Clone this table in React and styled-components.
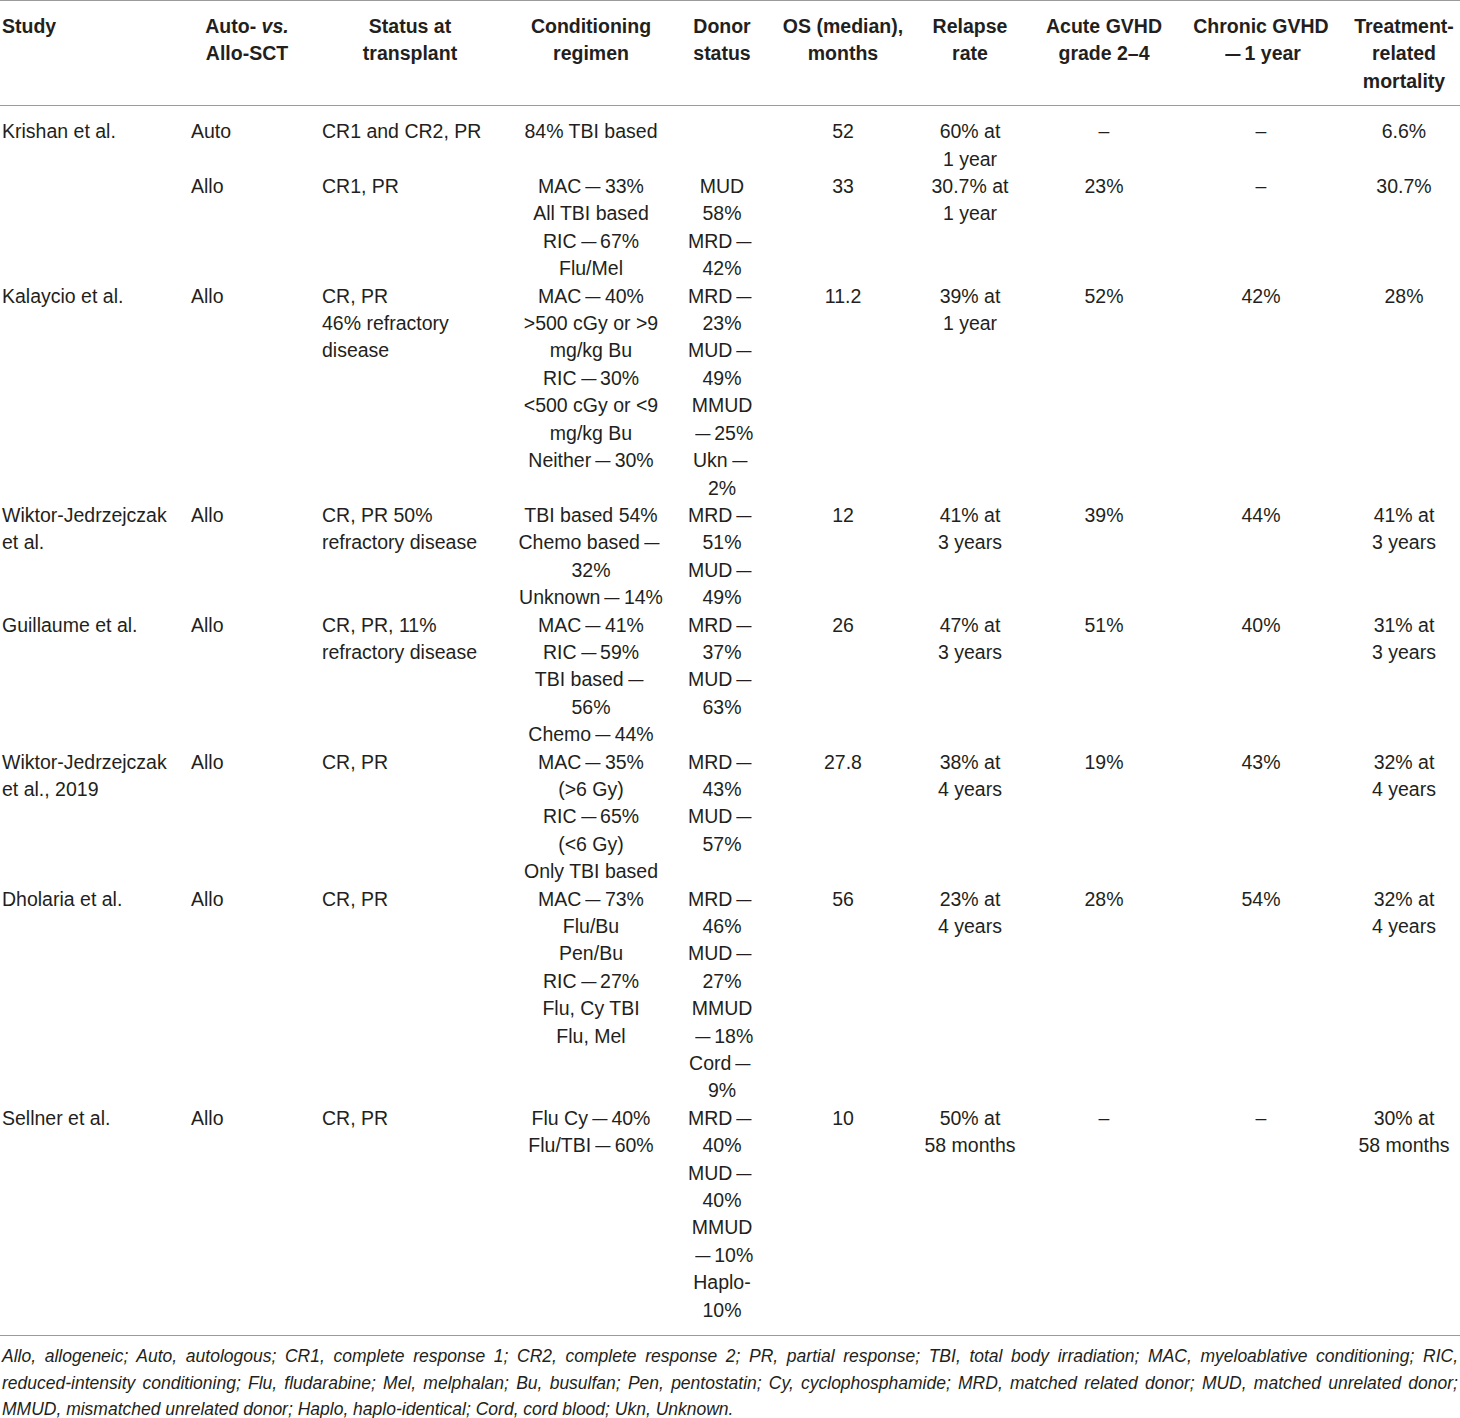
import React from "react";
import styled, { createGlobalStyle } from "styled-components";

const GlobalStyle = createGlobalStyle`
  body {
    margin: 0;
    background: #ffffff;
  }
`;

const columns = [
  { width: 191, body: "left", head: "left", pl: 2, pr: 0 },
  { width: 131, body: "left", head: "center", pl: 0, pr: 19 },
  { width: 196, body: "left", head: "center", pl: 0, pr: 20 },
  { width: 146, body: "center", head: "center", pl: 0, pr: 0 },
  { width: 116, body: "center", head: "center", pl: 0, pr: 0 },
  { width: 126, body: "center", head: "center", pl: 0, pr: 0 },
  { width: 128, body: "center", head: "center", pl: 0, pr: 0 },
  { width: 140, body: "center", head: "center", pl: 0, pr: 0 },
  { width: 174, body: "center", head: "center", pl: 0, pr: 0 },
  { width: 112, body: "center", head: "center", pl: 0, pr: 0 },
];

const headers = [
  ["Study"],
  [
    <>
      Auto- <i>vs.</i>
    </>,
    "Allo-SCT",
  ],
  ["Status at", "transplant"],
  ["Conditioning", "regimen"],
  ["Donor", "status"],
  ["OS (median),", "months"],
  ["Relapse", "rate"],
  ["Acute GVHD", "grade 2\u20134"],
  ["Chronic GVHD", "\u20141 year"],
  ["Treatment-", "related", "mortality"],
];

const rows = [
  [
    ["Krishan et al."],
    ["Auto"],
    ["CR1 and CR2, PR"],
    ["84% TBI based"],
    [],
    ["52"],
    ["60% at", "1 year"],
    ["\u2013"],
    ["\u2013"],
    ["6.6%"],
  ],
  [
    [],
    ["Allo"],
    ["CR1, PR"],
    ["MAC\u201433%", "All TBI based", "RIC\u201467%", "Flu/Mel"],
    ["MUD", "58%", "MRD\u2014", "42%"],
    ["33"],
    ["30.7% at", "1 year"],
    ["23%"],
    ["\u2013"],
    ["30.7%"],
  ],
  [
    ["Kalaycio et al."],
    ["Allo"],
    ["CR, PR", "46% refractory", "disease"],
    [
      "MAC\u201440%",
      ">500 cGy or >9",
      "mg/kg Bu",
      "RIC\u201430%",
      "<500 cGy or <9",
      "mg/kg Bu",
      "Neither\u201430%",
    ],
    ["MRD\u2014", "23%", "MUD\u2014", "49%", "MMUD", "\u201425%", "Ukn\u2014", "2%"],
    ["11.2"],
    ["39% at", "1 year"],
    ["52%"],
    ["42%"],
    ["28%"],
  ],
  [
    ["Wiktor-Jedrzejczak", "et al."],
    ["Allo"],
    ["CR, PR 50%", "refractory disease"],
    ["TBI based 54%", "Chemo based\u2014", "32%", "Unknown\u201414%"],
    ["MRD\u2014", "51%", "MUD\u2014", "49%"],
    ["12"],
    ["41% at", "3 years"],
    ["39%"],
    ["44%"],
    ["41% at", "3 years"],
  ],
  [
    ["Guillaume et al."],
    ["Allo"],
    ["CR, PR, 11%", "refractory disease"],
    ["MAC\u201441%", "RIC\u201459%", "TBI based\u2014", "56%", "Chemo\u201444%"],
    ["MRD\u2014", "37%", "MUD\u2014", "63%"],
    ["26"],
    ["47% at", "3 years"],
    ["51%"],
    ["40%"],
    ["31% at", "3 years"],
  ],
  [
    ["Wiktor-Jedrzejczak", "et al., 2019"],
    ["Allo"],
    ["CR, PR"],
    ["MAC\u201435%", "(>6 Gy)", "RIC\u201465%", "(<6 Gy)", "Only TBI based"],
    ["MRD\u2014", "43%", "MUD\u2014", "57%"],
    ["27.8"],
    ["38% at", "4 years"],
    ["19%"],
    ["43%"],
    ["32% at", "4 years"],
  ],
  [
    ["Dholaria et al."],
    ["Allo"],
    ["CR, PR"],
    ["MAC\u201473%", "Flu/Bu", "Pen/Bu", "RIC\u201427%", "Flu, Cy TBI", "Flu, Mel"],
    ["MRD\u2014", "46%", "MUD\u2014", "27%", "MMUD", "\u201418%", "Cord\u2014", "9%"],
    ["56"],
    ["23% at", "4 years"],
    ["28%"],
    ["54%"],
    ["32% at", "4 years"],
  ],
  [
    ["Sellner et al."],
    ["Allo"],
    ["CR, PR"],
    ["Flu Cy\u201440%", "Flu/TBI\u201460%"],
    ["MRD\u2014", "40%", "MUD\u2014", "40%", "MMUD", "\u201410%", "Haplo-", "10%"],
    ["10"],
    ["50% at", "58 months"],
    ["\u2013"],
    ["\u2013"],
    ["30% at", "58 months"],
  ],
];

const footnote = [
  "Allo, allogeneic; Auto, autologous; CR1, complete response 1; CR2, complete response 2; PR, partial response; TBI, total body irradiation; MAC, myeloablative conditioning; RIC,",
  "reduced-intensity conditioning; Flu, fludarabine; Mel, melphalan; Bu, busulfan; Pen, pentostatin; Cy, cyclophosphamide; MRD, matched related donor; MUD, matched unrelated donor;",
  "MMUD, mismatched unrelated donor; Haplo, haplo-identical; Cord, cord blood; Ukn, Unknown.",
];

// em dashes in the source font are shorter and sit with a little air around them
const withDashes = (text) => {
  if (typeof text !== "string" || !text.includes("\u2014")) return text;
  const parts = text.split("\u2014");
  return parts.map((part, i) => (
    <React.Fragment key={i}>
      {part}
      {i < parts.length - 1 && <Dash>{"\u2014"}</Dash>}
    </React.Fragment>
  ));
};

const App = () => {
  return (
    <>
      <GlobalStyle />
      <Page>
        <Table>
          <colgroup>
            {columns.map((col, i) => (
              <col key={i} style={{ width: col.width }} />
            ))}
          </colgroup>
          <thead>
            <HeadRow>
              {headers.map((lines, i) => (
                <HeadCell
                  key={i}
                  $align={columns[i].head}
                  $pl={columns[i].pl}
                  $pr={columns[i].pr}
                >
                  {lines.map((line, j) => (
                    <Line key={j}>{withDashes(line)}</Line>
                  ))}
                </HeadCell>
              ))}
            </HeadRow>
          </thead>
          <Body>
            {rows.map((row, r) => (
              <tr key={r}>
                {row.map((lines, i) => (
                  <Cell
                    key={i}
                    $align={columns[i].body}
                    $pl={columns[i].pl}
                    $pr={columns[i].pr}
                  >
                    {lines.map((line, j) => (
                      <Line key={j}>{withDashes(line)}</Line>
                    ))}
                  </Cell>
                ))}
              </tr>
            ))}
          </Body>
        </Table>
        <Footnote>
          {footnote.map((line, i) => (
            <NoteLine key={i} $last={i === footnote.length - 1}>
              {line}
            </NoteLine>
          ))}
        </Footnote>
      </Page>
    </>
  );
};

export default App;

const Page = styled.div`
  width: 1460px;
  font-family: "Liberation Sans", Arial, Helvetica, sans-serif;
  color: #231f20;
`;

const Table = styled.table`
  width: 1460px;
  table-layout: fixed;
  border-collapse: collapse;
  font-size: 19.5px;
  line-height: 27.4px;
`;

const HeadRow = styled.tr`
  border-top: 1px solid #9b9b9b;
  border-bottom: 1px solid #9b9b9b;
`;

const HeadCell = styled.th`
  padding: 12px ${(p) => p.$pr}px 10px ${(p) => p.$pl}px;
  text-align: ${(p) => p.$align};
  vertical-align: top;
  font-weight: 700;
  white-space: nowrap;
`;

const Body = styled.tbody`
  border-bottom: 1px solid #9b9b9b;

  tr:first-child td {
    padding-top: 12px;
  }

  tr:last-child td {
    padding-bottom: 11px;
  }
`;

const Cell = styled.td`
  padding: 0 ${(p) => p.$pr}px 0 ${(p) => p.$pl}px;
  text-align: ${(p) => p.$align};
  vertical-align: top;
  font-weight: 400;
  white-space: nowrap;
`;

const Line = styled.div`
  display: block;
`;

const Dash = styled.span`
  display: inline-block;
  margin: 0 2px;
  transform: scaleX(0.78);
`;

const Footnote = styled.div`
  padding: 7px 2px 0 2px;
  font-style: italic;
  font-size: 17.5px;
  line-height: 26.5px;
`;

const NoteLine = styled.div`
  white-space: nowrap;
  text-align: ${(p) => (p.$last ? "left" : "justify")};
  text-align-last: ${(p) => (p.$last ? "left" : "justify")};
`;
